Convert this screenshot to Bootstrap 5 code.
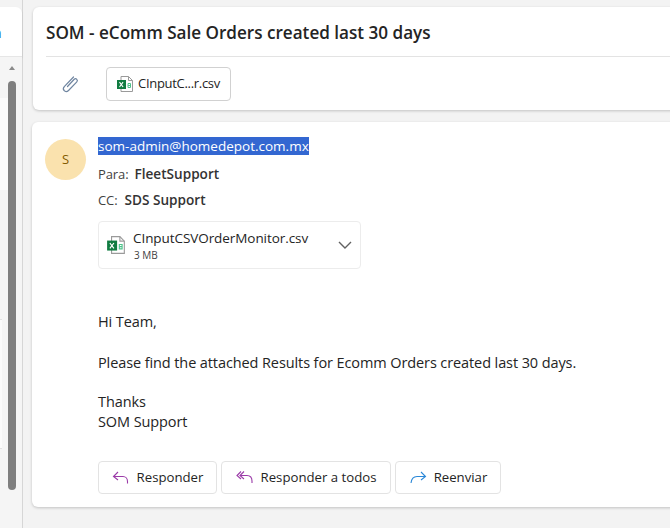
<!DOCTYPE html>
<html lang="es">
<head>
<meta charset="utf-8">
<title>SOM - eComm Sale Orders</title>
<link href="https://cdn.jsdelivr.net/npm/bootstrap@5.3.0/dist/css/bootstrap.min.css" rel="stylesheet">
<style>
html,body{height:528px;overflow:hidden}
body{background:#f3f3f3;font-family:"Open Sans","Noto Sans",sans-serif;color:#242424;font-size:14px;letter-spacing:-.1px}
.shell{width:670px;height:528px;overflow:hidden}
.side{width:23px;flex:0 0 23px;height:528px;padding-top:7px;border-right:1px solid #d6d6d6}
.side-top{height:50px;background:#fff;border-radius:0 6px 0 0;border-bottom:1px solid #e6e6e6;color:#0f5cad;font-size:14px;padding-top:16px;line-height:20px;overflow:hidden;box-shadow:0 1px 2px rgba(0,0,0,.12)}
.side-top span{display:block;margin-left:-7px}
.side-list{height:471px;background:#f5f5f5}
.rows{width:8px;flex:0 0 8px;padding-top:41px}
.row-a{height:92px;background:#fbfbfb;margin-bottom:129px}
.row-b{height:130px;width:2px;background:#fbfbfb;border-top:1px solid #e2e2e2;border-bottom:1px solid #e2e2e2}
.track{width:8px;height:100%}
.arrow{width:0;height:0;border-left:3.5px solid transparent;border-right:3.5px solid transparent;border-bottom:4px solid #8a8a8a;margin:9px 0 0 .5px}
.thumb{width:8px;height:409px;margin-top:11px;background:#7f7f7f;border-radius:4px}
.main{width:700px;flex:0 0 700px;padding:7px 0 0 10px}
.panel{background:#fff;border:0;border-radius:6px 0 0 6px;box-shadow:0 1px 3px rgba(0,0,0,.2)}
.subject{height:103px;padding:0 13px}
.subject h1{font-size:17.1px;font-weight:600;line-height:24px;margin:0;padding:14px 0 11px;border-bottom:1px solid #e3e3e3;height:50px;letter-spacing:0;font-family:"Open Sans",sans-serif}
.bar{height:53px}
.clip{width:60px;padding-left:15px;height:53px}
.chip{width:125px;height:34px;border:1px solid #d1d1d1;border-radius:4px;padding-left:9px;gap:4px;font-size:13px;letter-spacing:-.3px}
.message{height:385px;margin-top:12px;margin-left:-1px;padding:15px 0 0 13px}
.avatar{width:41px;height:41px;flex:0 0 41px;border-radius:50%;background:#fae2ae;color:#835b00;font-size:13px;margin-top:2px}
.meta{margin-left:12px}
.sender{line-height:18px;height:18px;font-size:13.5px}
.sender span{background:#3367d1;color:#fff;display:inline-block;letter-spacing:0}
.to{font-size:13px;line-height:18px;color:#424242;margin-top:8px;gap:6px}
.first{margin-top:10px}
.cc{gap:7px}
.to b{font-weight:600;color:#333;font-size:13.6px;letter-spacing:0}
.file{width:263px;height:48px;margin-top:12px;border:1px solid #ececec;border-radius:4px;padding:0 8px 0 7px;gap:7px}
.fname{font-size:13.5px;line-height:17px;letter-spacing:-.07px;margin-top:1px}
.fsize{font-size:10px;line-height:13px;color:#424242;margin:2px 0 0 1px;letter-spacing:0}
.body-text{margin:43px 0 0 53px;font-size:14.5px;line-height:20px;letter-spacing:-.1px}
.body-text p{margin:0 0 19px}
.body-text p:first-child{margin-bottom:21px}
.actions{margin:29px 0 0 53px;gap:4px}
.act{height:33px;border:1px solid #e3e3e3;border-radius:4px;background:#fff;color:#242424;font-size:13.2px;padding:0;gap:7px;letter-spacing:0;display:flex;align-items:center;justify-content:center}
.a1{width:119px}.a2{width:170px}.a3{width:106px}
</style>
</head>
<body>
<div class="shell d-flex">
  <aside class="side">
    <div class="side-top"><span>n</span></div>
    <div class="side-list d-flex">
      <div class="rows"><div class="row-a"></div><div class="row-b"></div></div>
      <div class="track"><div class="arrow"></div><div class="thumb"></div></div>
    </div>
  </aside>
  <main class="main">
    <section class="panel subject">
      <h1>SOM - eComm Sale Orders created last 30 days</h1>
      <div class="bar d-flex align-items-center">
        <div class="clip d-flex align-items-center">
          <svg width="20" height="20" viewBox="0 0 20 20" fill="none" stroke="#6f85a0" stroke-width="1.200" stroke-linecap="round"><path d="M6.500 12.500 13 5.500c1-1 2.200-.8 2.800-.2.7.7.8 1.800-.2 2.800L7.500 16.500c-1.500 1.500-3.300 1.300-4.300.2-1-1-1.100-2.800.3-4.300L12.500 3"/></svg>
        </div>
        <div class="chip d-flex align-items-center">
          <svg width="18" height="18" viewBox="0 0 18 18"><path d="M5 1.500h7.500L16.500 5.500V16.500H5z" fill="#fff" stroke="#9a9a9a"/><path d="M12.500 1.500v4h4" fill="none" stroke="#9a9a9a"/><rect x="1" y="5" width="9" height="9" fill="#107c41"/><path d="M3.500 7.200l3.600 4.800M7.100 7.200l-3.600 4.800" stroke="#fff" stroke-width="1.100"/><path d="M12 8.500h2.500v4H12zM12 10.500h2.500" fill="none" stroke="#4cc38a"/></svg>
          <span>CInputC...r.csv</span>
        </div>
      </div>
    </section>
    <section class="panel message">
      <div class="d-flex">
        <div class="avatar d-flex align-items-center justify-content-center">S</div>
        <div class="meta">
          <div class="sender"><span>som-admin@homedepot.com.mx</span></div>
          <div class="to first d-flex"><span>Para:</span><b>FleetSupport</b></div>
          <div class="to cc d-flex"><span>CC:</span><b>SDS Support</b></div>
          <div class="file d-flex align-items-center">
            <svg width="20" height="20" viewBox="0 0 18 18"><path d="M5 1.500h7.500L16.500 5.500V16.500H5z" fill="#fff" stroke="#9a9a9a"/><path d="M12.500 1.500v4h4" fill="none" stroke="#9a9a9a"/><rect x="1" y="5" width="9" height="9" fill="#107c41"/><path d="M3.500 7.200l3.600 4.800M7.100 7.200l-3.600 4.800" stroke="#fff" stroke-width="1.100"/><path d="M12 8.500h2.500v4H12zM12 10.500h2.500" fill="none" stroke="#4cc38a"/></svg>
            <div class="flex-grow-1"><div class="fname">CInputCSVOrderMonitor.csv</div><div class="fsize">3 MB</div></div>
            <svg width="14" height="8" viewBox="0 0 14 8" fill="none" stroke="#616161" stroke-width="1.400"><path d="M1 1l6 6 6-6"/></svg>
          </div>
        </div>
      </div>
      <div class="body-text">
        <p>Hi Team,</p>
        <p>Please find the attached Results for Ecomm Orders created last 30 days.</p>
        <div>Thanks<br>SOM Support</div>
      </div>
      <div class="actions d-flex">
        <button type="button" class="btn act a1"><svg width="18" height="16" viewBox="0 0 18 16" fill="none" stroke="#9b3ba8" stroke-width="1.100"><path d="M6 2 1.500 6.500 6 10M1.500 6.500H11c2.500 0 4.500 2 4.500 5v2"/></svg>Responder</button>
        <button type="button" class="btn act a2"><svg width="18" height="16" viewBox="0 0 18 16" fill="none" stroke="#9b3ba8" stroke-width="1.100"><path d="M5 1.500 1 5.500 5 9M8 1.500 4 5.500 8 9M4 5.500h7c3 0 5 2 5 5.500v2"/></svg>Responder a todos</button>
        <button type="button" class="btn act a3"><svg width="18" height="16" viewBox="0 0 18 16" fill="none" stroke="#2b88d8" stroke-width="1.100"><path d="M12 2l4.500 4.500L12 10M16.500 6.500H8c-3 0-5.500 2-6 6.500"/></svg>Reenviar</button>
      </div>
    </section>
  </main>
</div>
</body>
</html>
